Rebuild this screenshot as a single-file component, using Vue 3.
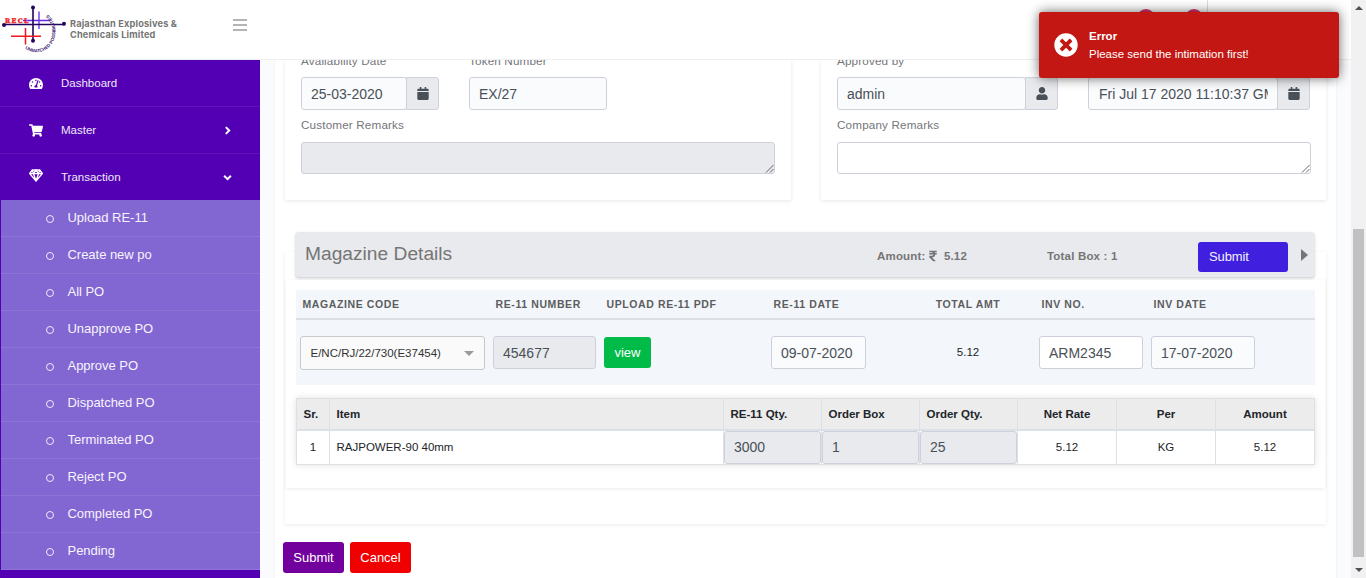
<script setup>
const submenu = ['Upload RE-11', 'Create new po', 'All PO', 'Unapprove PO', 'Approve PO', 'Dispatched PO', 'Terminated PO', 'Reject PO', 'Completed PO', 'Pending']
const calendar = 'M12 192h424c6.6 0 12 5.4 12 12v260c0 26.5-21.5 48-48 48H48c-26.5 0-48-21.5-48-48V204c0-6.6 5.4-12 12-12zm436-44v-36c0-26.5-21.5-48-48-48h-48V12c0-6.6-5.4-12-12-12h-40c-6.6 0-12 5.4-12 12v52H160V12c0-6.6-5.4-12-12-12h-40c-6.6 0-12 5.4-12 12v52H48C21.5 64 0 85.5 0 112v36c0 6.6 5.4 12 12 12h424c6.6 0 12-5.4 12-12z'
const user = 'M224 256c70.7 0 128-57.3 128-128S294.7 0 224 0 96 57.3 96 128s57.3 128 128 128zm89.6 32h-16.7c-22.2 10.2-46.9 16-72.9 16s-50.6-5.8-72.9-16h-16.7C60.2 288 0 348.2 0 422.4V464c0 26.5 21.5 48 48 48h352c26.5 0 48-21.5 48-48v-41.6c0-74.2-60.2-134.4-134.4-134.4z'
const gauge = 'M288 32C128.94 32 0 160.94 0 320c0 52.8 14.25 102.26 39.06 144.8 5.61 9.62 16.3 15.2 27.44 15.2h443c11.14 0 21.83-5.58 27.44-15.2C561.75 422.26 576 372.8 576 320c0-159.06-128.94-288-288-288zm0 64c14.71 0 26.58 10.13 30.32 23.65-1.11 2.26-2.64 4.23-3.45 6.67l-9.22 27.67c-5.13 3.49-10.97 6.01-17.64 6.01-17.67 0-32-14.33-32-32S270.33 96 288 96zM96 384c-17.67 0-32-14.33-32-32s14.33-32 32-32 32 14.33 32 32-14.33 32-32 32zm48-160c-17.67 0-32-14.33-32-32s14.33-32 32-32 32 14.33 32 32-14.33 32-32 32zm246.77-72.41l-61.33 184C343.13 347.33 352 364.54 352 384c0 11.72-3.38 22.55-8.88 32H232.88c-5.5-9.45-8.88-20.28-8.88-32 0-33.94 26.5-61.43 59.9-63.59l61.34-184.01c4.17-12.56 17.73-19.45 30.36-15.17 12.57 4.19 19.35 17.79 15.17 30.36zm14.66 57.2l15.52-46.55c3.47-1.29 7.13-2.23 11.05-2.23 17.67 0 32 14.33 32 32s-14.33 32-32 32c-11.38-.01-20.89-6.28-26.57-15.22zM480 384c-17.67 0-32-14.33-32-32s14.33-32 32-32 32 14.33 32 32-14.33 32-32 32z'
const cart = 'M528.12 301.319l47.273-208C578.806 78.301 567.391 64 551.99 64H159.208l-9.166-44.81C147.758 8.021 137.93 0 126.529 0H24C10.745 0 0 10.745 0 24v16c0 13.255 10.745 24 24 24h69.883l70.248 343.435C147.325 417.1 136 435.222 136 456c0 30.928 25.072 56 56 56s56-25.072 56-56c0-15.674-6.447-29.835-16.824-40h209.647C430.447 426.165 424 440.326 424 456c0 30.928 25.072 56 56 56s56-25.072 56-56c0-22.172-12.888-41.332-31.579-50.405l5.517-24.276c3.413-15.018-8.002-29.319-23.403-29.319H218.117l-6.545-32h293.145c11.206 0 20.92-7.754 23.403-18.681z'
const rupee = 'M308 96c6.627 0 12-5.373 12-12V44c0-6.627-5.373-12-12-12H12C5.373 32 0 37.373 0 44v44.748c0 6.627 5.373 12 12 12h85.28c27.308 0 48.261 9.958 60.97 27.252H12c-6.627 0-12 5.373-12 12v40c0 6.627 5.373 12 12 12h158.757c-6.217 36.086-32.961 58.632-74.757 58.632H12c-6.627 0-12 5.373-12 12v53.012c0 3.349 1.4 6.546 3.861 8.818l165.052 152.356a12.001 12.001 0 0 0 8.139 3.182h82.562c10.924 0 16.166-13.408 8.139-20.818L116.871 319.906c76.499-2.34 131.144-53.395 138.318-127.906H308c6.627 0 12-5.373 12-12v-40c0-6.627-5.373-12-12-12h-58.69c-3.486-11.541-8.28-22.246-14.252-32H308z'
</script>

<template>
  <div class="page">
    <div class="app">
      <header class="topbar">
        <svg class="logo" width="68" height="56" viewBox="0 0 68 56">
          <defs><path id="ring" d="M25 45.500 C34 52 46 50 52 40.500 C58 30 56 19 47.500 11" /></defs>
          <path d="M39 8.500v17.500M23 17.500h27" stroke="#6a2be8" stroke-width="1.300" />
          <path d="M33 5v34M4 21.500h60" stroke="#24055c" stroke-width="1.600" />
          <path d="M25.500 25v16.500M11 33.300h30" stroke="#f01820" stroke-width="1.500" />
          <g fill="#24055c"><circle cx="33" cy="4.500" r="2" /><circle cx="4" cy="22" r="2" /><circle cx="64" cy="20.800" r="2" /><circle cx="33" cy="37.800" r="2" /></g>
          <text x="5" y="19.500" class="logo-name">RECL</text>
          <text class="logo-ring"><textPath href="#ring">UNMATCHED POSSIBILITIES</textPath></text>
        </svg>
        <div class="brand">Rajasthan Explosives &amp;<br>Chemicals Limited</div>
        <div class="burger"><i></i><i></i><i></i></div>
        <div class="badges"><i></i><i></i><b></b></div>
      </header>
      <div class="body">
        <nav class="side">
          <div class="nav"><svg class="ni" viewBox="0 0 576 512"><path :d="gauge" /></svg><span>Dashboard</span></div>
          <div class="nav"><svg class="ni" viewBox="0 0 576 512"><path :d="cart" /></svg><span>Master</span>
            <svg class="chev" viewBox="0 0 8 8"><path d="M2.500 1 5.500 4l-3 3" /></svg></div>
          <div class="nav last"><svg class="ni gem" viewBox="0 0 14 13"><path d="M3.300 1h7.400L13.300 4.600 7 12 .7 4.600zM.8 4.600h12.400M7 1 4.500 4.600 7 12l2.500-7.400zM3.300 1l1.200 3.600M10.700 1 9.500 4.600" /></svg><span>Transaction</span>
            <svg class="chev" viewBox="0 0 8 8"><path d="M1 2.500 4 5.500l3-3" /></svg></div>
          <ul>
            <li v-for="s in submenu" :key="s"><i></i>{{ s }}</li>
          </ul>
        </nav>
        <main>
          <div class="sheet">
            <div class="cards">
              <section class="card">
                <div class="fields">
                  <div class="f1"><label>Availability Date</label>
                    <div class="group"><div class="input ro">25-03-2020</div><div class="addon"><svg viewBox="0 0 448 512"><path :d="calendar" /></svg></div></div></div>
                  <div class="f1"><label>Token Number</label><div class="input ro full">EX/27</div></div>
                </div>
                <label class="rem">Customer Remarks</label>
                <div class="area dis"><svg viewBox="0 0 9 9"><path d="M1 8.500 8.500 1M5 8.500 8.500 5" /></svg></div>
              </section>
              <section class="card right">
                <div class="fields">
                  <div class="f2"><label>Approved by</label>
                    <div class="group"><div class="input ro">admin</div><div class="addon"><svg viewBox="0 0 448 512"><path :d="user" /></svg></div></div></div>
                  <div class="f3"><label></label>
                    <div class="group"><div class="input ro"><span class="clip">Fri Jul 17 2020 11:10:37 GMT</span></div><div class="addon"><svg viewBox="0 0 448 512"><path :d="calendar" /></svg></div></div></div>
                </div>
                <label class="rem">Company Remarks</label>
                <div class="area"><svg viewBox="0 0 9 9"><path d="M1 8.500 8.500 1M5 8.500 8.500 5" /></svg></div>
              </section>
            </div>

            <section class="mag">
              <div class="maghead">
                <h4>Magazine Details</h4>
                <div class="amt">Amount: <svg viewBox="0 0 320 512"><path :d="rupee" /></svg><span>5.12</span></div>
                <div class="box">Total Box : 1</div>
                <div class="sub">Submit</div>
                <i class="caret"></i>
              </div>
              <div class="magbody">
                <div class="mrow mh"><span>MAGAZINE CODE</span><span>RE-11 NUMBER</span><span>UPLOAD RE-11 PDF</span><span>RE-11 DATE</span><span class="c">TOTAL AMT</span><span>INV NO.</span><span>INV DATE</span></div>
                <div class="mrow mv">
                  <div><div class="select">E/NC/RJ/22/730(E37454)<i></i></div></div>
                  <div><div class="input box3 dis">454677</div></div>
                  <div><div class="view">view</div></div>
                  <div><div class="input box4 ro">09-07-2020</div></div>
                  <div class="tot">5.12</div>
                  <div><div class="input box5">ARM2345</div></div>
                  <div><div class="input box5 ro">17-07-2020</div></div>
                </div>
                <div class="items">
                  <div class="irow ih"><span>Sr.</span><span>Item</span><span>RE-11 Qty.</span><span>Order Box</span><span>Order Qty.</span><span class="c">Net Rate</span><span class="c">Per</span><span class="c">Amount</span></div>
                  <div class="irow iv"><span class="c">1</span><span>RAJPOWER-90 40mm</span><span class="q"><b>3000</b></span><span class="q"><b>1</b></span><span class="q"><b>25</b></span><span class="c">5.12</span><span class="c">KG</span><span class="c">5.12</span></div>
                </div>
              </div>
            </section>
            <div class="actions"><div class="btn purple">Submit</div><div class="btn red">Cancel</div></div>
          </div>
        </main>
      </div>
    </div>
    <div class="scroll"><i class="up"></i><div class="thumb"></div><i class="down"></i></div>
    <div class="toast">
      <svg viewBox="0 0 24 24"><circle cx="12" cy="12" r="11.700" fill="#fff" /><path d="M8.300 8.300l7.400 7.400M15.700 8.300l-7.400 7.400" stroke="#c21712" stroke-width="3.800" stroke-linecap="square" /></svg>
      <div><strong>Error</strong><p>Please send the intimation first!</p></div>
    </div>
  </div>
</template>

<style>
html, body { overflow: hidden; }
</style>
<style scoped>
* { box-sizing: border-box; }
.page { position: relative; display: flex; width: 1366px; height: 578px; overflow: hidden; font-family: "Liberation Sans", Arial, sans-serif; font-size: 12px; color: #212529; }
.app { width: 1351px; height: 578px; display: flex; flex-direction: column; }
.topbar { height: 60px; flex: none; display: flex; background: #fff; border-bottom: 1px solid #eeeff1; }
.logo { flex: none; margin: 3px 0 0; fill: none; }
.logo-name { font: 700 6.200px "DejaVu Serif", serif; letter-spacing: 1.400px; fill: #f01820; stroke: #f01820; stroke-width: .4; }
.logo-ring { font: 700 4.500px "Liberation Sans", sans-serif; fill: #3c2070; }
.brand { width: 120px; margin: 18px 0 0 2px; font: 700 9.200px/11px Inter, sans-serif; letter-spacing: .17px; color: #757575; white-space: nowrap; }
.burger { width: 14px; height: 13px; margin: 19px 0 0 43px; display: flex; flex-direction: column; gap: 3px; }
.burger i { height: 2px; background: #b4b4b4; }
.badges { margin-left: auto; margin-right: 143px; display: flex; }
.badges i { width: 18px; height: 18px; border-radius: 50%; background: #d6336c; margin: 9px 30px 0 0; }
.badges i + i { margin-right: 4px; }
.badges b { width: 1px; background: #ddd; }
.body { flex: 1; display: flex; min-height: 0; }
.side { width: 260px; flex: none; background: #5300b5; color: #eee8f8; }
.nav { height: 47px; display: flex; align-items: center; border-bottom: 1px solid #5f12ba; padding-left: 29px; font-size: 11.500px; }
.nav.last { height: 46px; border: 0; }
.nav span { flex: 1; padding-left: 18px; }
.ni { width: 14px; height: 13px; fill: #fff; }
.gem { fill: none; stroke: #fff; stroke-width: 1.400; margin-top: -3px; }
.chev { width: 9px; height: 9px; margin: 1px 28.500px 0 0; fill: none; stroke: #fff; stroke-width: 1.800; }
ul { margin: 0 0 0 1px; padding: 0; list-style: none; background: #8266d2; }
li { height: 37px; display: flex; align-items: center; font-size: 13px; letter-spacing: -.03px; color: #f7f4fc; padding: 0 0 1px 45px; border-bottom: 1px solid #8d74d6; }
li i { width: 8px; height: 8px; border: 1px solid #f0ecfa; border-radius: 50%; margin: 3px 13.500px 0 0; }
main { flex: 1; overflow: hidden; background: #fafbfd; padding: 0 15px; }
.sheet { height: 540px; background: #fff; padding: 0 10px; box-shadow: 0 0 3px rgba(0,0,0,.06); }
.cards { display: flex; gap: 30px; height: 140px; }
.card { width: 506px; height: 140px; padding: 0 16px; box-shadow: 0 1px 4px rgba(0,0,0,.1); }
.card.right { width: 505px; padding-right: 15.500px; }
.fields { display: flex; gap: 30px; margin-top: -7px; }
label { display: block; height: 24px; line-height: 16px; font-size: 11.700px; letter-spacing: .15px; color: #75757a; }
.f1 { width: 138px; }
.f2 { width: 221px; }
.f3 { width: 222px; }
.group { display: flex; }
.input { height: 33px; border: 1px solid #ced1dc; border-radius: 3px; padding: 0 9px; line-height: 32px; font-size: 14px; color: #495057; background: #fff; white-space: nowrap; }
.ro { background: #fafbfd; }
.group .input { flex: 1; min-width: 0; border-radius: 3px; }
.clip { display: block; overflow: hidden; text-indent: 1px; }
.addon { width: 33px; height: 33px; margin-left: -1px; border: 1px solid #ced1dc; border-radius: 0 3px 3px 0; background: #e9eaee; display: flex; align-items: center; justify-content: center; }
.addon svg { width: 12px; height: 13px; fill: #495057; }
.rem { margin-top: 7px; height: 25px; }
.area { height: 32px; border: 1px solid #ced1dc; border-radius: 3px; display: flex; justify-content: flex-end; align-items: flex-end; }
.area svg { width: 9px; height: 9px; stroke: #555; fill: none; stroke-width: .9; }
.dis { background: #e9eaee; }
.mag { margin-top: 52px; height: 272px; box-shadow: 0 1px 4px rgba(0,0,0,.08); display: flow-root; }
.maghead { position: relative; height: 46px; margin: -20px 11px 0 10px; background: #e9eaee; border-bottom: 1px solid #d9dade; border-radius: 4px; box-shadow: 0 1px 3px rgba(0,0,0,.12); display: flex; padding-left: 10px; color: #757575; font-weight: 700; font-size: 11.500px; letter-spacing: .18px; white-space: nowrap; }
h4 { margin: 10px 0 0; width: 572px; font-size: 19.200px; line-height: 23px; font-weight: 400; letter-spacing: 0; }
.amt { width: 170px; line-height: 48px; }
.amt svg { width: 8px; height: 12px; fill: #757575; vertical-align: -2px; margin-right: 7px; }
.box { width: 151px; line-height: 48px; }
.sub { width: 90px; height: 30px; margin-top: 10px; background: #4020de; color: #f3f0ff; border-radius: 3px; padding-left: 11px; font: 400 13px/30px "Liberation Sans", sans-serif; letter-spacing: -.1px; }
.caret { margin: 17px 0 0 13px; height: 0; border: solid transparent; border-width: 6px 0 6px 7px; border-left-color: #757575; }
.magbody { position: relative; height: 208px; margin: 2px 1px 0; background: #fff; padding: 10px 10px 0; box-shadow: 0 1px 4px rgba(0,0,0,.08); }
.mrow { display: grid; grid-template-columns: 193px 111px 167px 134px 134px 112px 168px; background: #f3f7fc; }
.mh { height: 30px; border-bottom: 2px solid #dadfe5; font-size: 10.500px; font-weight: 700; letter-spacing: .6px; line-height: 28px; color: #5d5d5d; }
.mh span { padding-left: 6.500px; white-space: nowrap; }
.mrow .c, .irow .c { text-align: center; padding: 0; }
.mv { height: 65px; padding-top: 16px; }
.mv > div { padding-left: 4px; }
.select { width: 185px; height: 34px; border: 1px solid #c8c9cc; border-radius: 3px; background: #fafafa; padding: 0 10px 0 9.500px; font-size: 11.500px; line-height: 33px; display: flex; align-items: center; justify-content: space-between; color: #333; }
.select i { border: solid transparent; border-width: 5px 5px 0; border-top-color: #999; }
.box3 { width: 103px; }
.box4 { width: 95px; }
.box5 { width: 104px; }
.input.box3.dis { background: #e9eaee; }
.view { width: 47px; height: 31px; margin-top: 1px; background: #00bb48; color: #fff; border-radius: 3px; font-size: 13px; line-height: 31px; text-align: center; }
.mv > .tot { padding: 0; text-align: center; font-size: 11.500px; line-height: 32px; }
.items { margin-top: 13px; border-right: 1px solid #dee0e5; border-bottom: 1px solid #dee0e5; box-shadow: 0 0 7px rgba(0,0,0,.12); }
.irow { display: grid; grid-template-columns: 33px 394px 98px 98px 98px 99px 99px 99px; font-size: 11.500px; }
.irow > span { border-left: 1px solid #dee0e5; padding-left: 6.500px; white-space: nowrap; }
.ih { height: 33px; background: #ececec; border-top: 1px solid #dee0e5; border-bottom: 2px solid #dce0e7; font-weight: 700; line-height: 30px; }
.iv { height: 33px; line-height: 33px; background: #fff; }
.irow > .q { padding: 0; }
.q b { display: block; height: 33px; border: 1px solid #ced1dc; border-radius: 3px; background: #e9eaee; color: #495057; font-weight: 400; font-size: 14px; line-height: 31px; padding-left: 9px; }
.actions { display: flex; gap: 6px; margin: 18px 0 0 -2px; }
.btn { width: 61px; height: 31px; border-radius: 3px; font-size: 13px; line-height: 31px; text-align: center; color: #fff; }
.purple { background: #72009c; }
.red { background: #f00000; }
.scroll { width: 15px; height: 578px; background: #f1f1f1; display: flex; flex-direction: column; align-items: center; }
.up { margin-top: 6px; border: solid transparent; border-width: 0 4px 4px; border-bottom-color: #505050; }
.thumb { width: 11px; height: 328px; margin-top: 219px; background: #c1c1c1; }
.down { margin-top: 11px; border: solid transparent; border-width: 4px 4px 0; border-top-color: #505050; }
.toast { position: absolute; left: 1039px; top: 12px; width: 300px; height: 66px; border-radius: 3px; background: #c21712; box-shadow: 0 0 12px rgba(0,0,0,.6); color: #fff; display: flex; padding: 0 15px; }
.toast svg { width: 24px; height: 24px; margin: 21px 11px 0 0; }
.toast strong { display: block; margin-top: 17px; font-size: 11.500px; line-height: 14px; }
.toast p { margin: 4px 0 0; font-size: 11.500px; line-height: 14px; }
</style>
